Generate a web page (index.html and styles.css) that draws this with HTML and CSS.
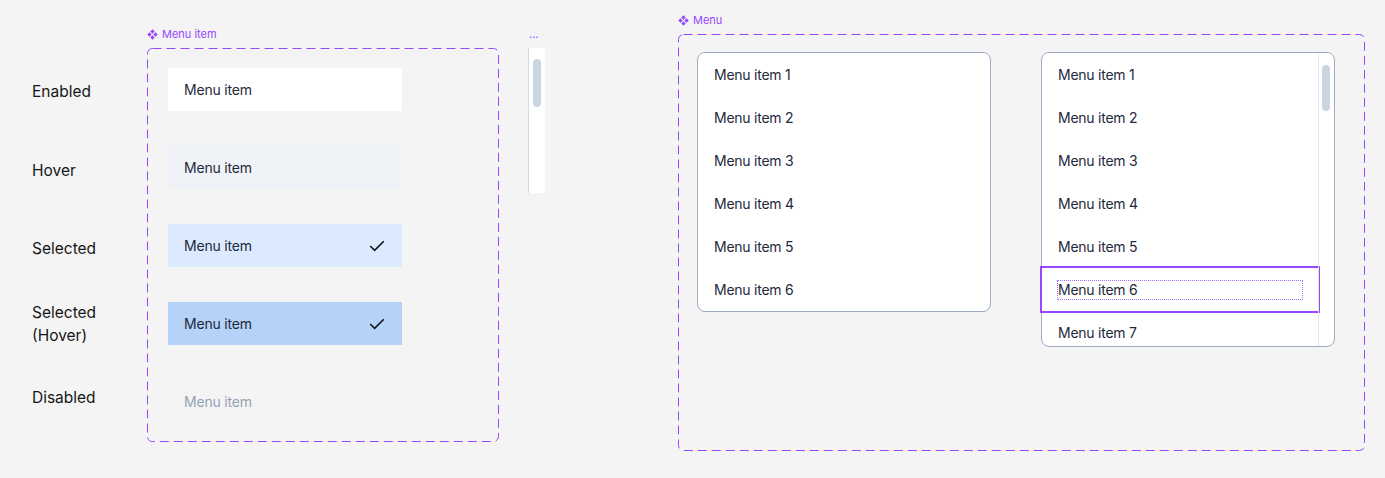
FILE: index.html
```html
<!DOCTYPE html>
<html lang="en">
<head>
<meta charset="utf-8">
<title>Menu</title>
<link rel="stylesheet" href="styles.css">
</head>
<body>
<div class="canvas">
  <section class="states">
    <div class="state-labels">
      <div class="state-label">Enabled</div>
      <div class="state-label">Hover</div>
      <div class="state-label">Selected</div>
      <div class="state-label">Selected<br>(Hover)</div>
      <div class="state-label">Disabled</div>
    </div>
    <div class="component">
      <div class="comp-title">
        <svg class="comp-icon" viewBox="0 0 11 11" width="11" height="11"><path d="M5.5 0.3 L7.7 2.5 L5.5 4.7 L3.3 2.5 Z M2.5 3.3 L4.7 5.5 L2.5 7.7 L0.3 5.5 Z M8.5 3.3 L10.7 5.5 L8.5 7.7 L6.3 5.5 Z M5.5 6.3 L7.7 8.5 L5.5 10.7 L3.3 8.5 Z"/></svg>
        <span>Menu item</span>
      </div>
      <div class="dashed-frame states-frame">
        <svg class="dash"><rect x="0.5" y="0.5" width="100%" height="100%" rx="5" ry="5"/></svg>
        <div class="mi">Menu item</div>
        <div class="mi hover">Menu item</div>
        <div class="mi selected">Menu item<svg class="check" viewBox="0 0 16 16" width="16" height="16"><path d="M1.2 8 L5.6 12.4 L14.8 3.2"/></svg></div>
        <div class="mi selected-hover">Menu item<svg class="check" viewBox="0 0 16 16" width="16" height="16"><path d="M1.2 8 L5.6 12.4 L14.8 3.2"/></svg></div>
        <div class="mi disabled">Menu item</div>
      </div>
    </div>
  </section>

  <section class="scroll-comp">
    <div class="comp-title"><span>...</span></div>
    <div class="strip"><div class="thumb strip-thumb"></div></div>
  </section>

  <section class="menus-comp">
    <div class="comp-title">
      <svg class="comp-icon" viewBox="0 0 11 11" width="11" height="11"><path d="M5.5 0.3 L7.7 2.5 L5.5 4.7 L3.3 2.5 Z M2.5 3.3 L4.7 5.5 L2.5 7.7 L0.3 5.5 Z M8.5 3.3 L10.7 5.5 L8.5 7.7 L6.3 5.5 Z M5.5 6.3 L7.7 8.5 L5.5 10.7 L3.3 8.5 Z"/></svg>
      <span>Menu</span>
    </div>
    <div class="dashed-frame menus-frame">
      <svg class="dash"><rect x="0.5" y="0.5" width="100%" height="100%" rx="5" ry="5"/></svg>
      <div class="menu">
        <div class="menu-item">Menu item 1</div>
        <div class="menu-item">Menu item 2</div>
        <div class="menu-item">Menu item 3</div>
        <div class="menu-item">Menu item 4</div>
        <div class="menu-item">Menu item 5</div>
        <div class="menu-item">Menu item 6</div>
      </div>
      <div class="menu menu-scroll">
        <div class="menu-list">
          <div class="menu-item">Menu item 1</div>
          <div class="menu-item">Menu item 2</div>
          <div class="menu-item">Menu item 3</div>
          <div class="menu-item">Menu item 4</div>
          <div class="menu-item">Menu item 5</div>
          <div class="menu-item focused"><span class="focus-ring">Menu item 6</span></div>
          <div class="menu-item">Menu item 7</div>
        </div>
        <div class="track"><div class="thumb track-thumb"></div></div>
      </div>
    </div>
  </section>
</div>
</body>
</html>
```

FILE: styles.css
```css
* { box-sizing: border-box; }

html, body {
  margin: 0;
  background: #f4f4f4;
}

body {
  font-family: Inter, "Noto Sans", "Liberation Sans", sans-serif;
  color: #1e293b;
}

.canvas {
  display: flex;
  align-items: flex-start;
  padding: 13px 0 0 32px;
  height: 478px;
}

/* ---------- titles ---------- */
.comp-title {
  display: flex;
  align-items: center;
  gap: 4px;
  height: 14px;
  margin-bottom: 7px;
  font-size: 11px;
  line-height: 14px;
  color: #9747ff;
  white-space: nowrap;
}

.comp-icon {
  fill: #9747ff;
  flex: none;
}

/* ---------- dashed frames ---------- */
.dashed-frame {
  position: relative;
}

.dash {
  position: absolute;
  left: 0;
  top: 0;
  width: calc(100% - 1px);
  height: calc(100% - 1px);
  overflow: visible;
  pointer-events: none;
}

.dash rect {
  fill: none;
  stroke: #9747ff;
  stroke-width: 1;
  stroke-dasharray: 9 5;
}

/* ---------- states ---------- */
.states {
  display: flex;
  margin-top: 14px;
}

.state-labels {
  width: 115px;
  padding-top: 53px;
  display: grid;
  grid-template-rows: 79px 78px 64px 85px 23px;
}

.state-label {
  font-size: 15.5px;
  line-height: 23px;
  color: #161616;
}

.states-frame {
  width: 352px;
  height: 394px;
  padding: 20px 0 0 21px;
  display: flex;
  flex-direction: column;
  gap: 35px;
}

.mi {
  width: 234px;
  height: 43px;
  padding: 0 17px 0 16px;
  display: flex;
  align-items: center;
  justify-content: space-between;
  font-size: 14px;
  letter-spacing: -0.2px;
  color: #1e293b;
  background: #ffffff;
}

.mi.hover { background: #eff2f7; }
.mi.selected { background: #dbeafe; }
.mi.selected-hover { background: #b5d3f8; }
.mi.disabled { background: transparent; color: #94a3b8; }

.check {
  flex: none;
  fill: none;
  stroke: #161616;
  stroke-width: 1.6;
}

/* ---------- scrollbar strip ---------- */
.scroll-comp {
  margin-top: 14px;
  margin-left: 29px;
  width: 17px;
}

.scroll-comp .comp-title {
  padding-left: 1px;
}

.strip {
  width: 17px;
  height: 145px;
  padding: 11px 0 0 4px;
  background: #ffffff;
  border-left: 1px solid #d3dce7;
}

.thumb {
  width: 8px;
  border-radius: 4px;
  background: #cbd5e1;
}

.strip-thumb {
  height: 48px;
}

/* ---------- menus ---------- */
.menus-comp {
  margin-left: 133px;
}

.menus-frame {
  width: 687px;
  height: 417px;
  padding: 18px 0 0 19px;
  display: flex;
  align-items: flex-start;
  gap: 50px;
}

.menu {
  width: 294px;
  background: #ffffff;
  border: 1px solid #9eabc5;
  border-radius: 8px;
}

.menu-item {
  height: 43px;
  padding: 0 16px;
  display: flex;
  align-items: center;
  font-size: 14px;
  letter-spacing: -0.25px;
  color: #1e293b;
  white-space: nowrap;
}

.menu-scroll {
  height: 295px;
  display: flex;
}

.menu-list {
  flex: 1;
  min-width: 0;
  overflow-x: visible;
  overflow-y: clip;
}

.track {
  width: 16px;
  flex: none;
  padding: 12px 0 0 3px;
  border-left: 1px solid #e2e8f0;
}

.track-thumb {
  height: 46px;
}

.menu-item.focused {
  outline: 2px solid #9747ff;
  outline-offset: 0;
}

.focus-ring {
  flex: 1;
  line-height: 18px;
  outline: 1px dotted #a56dff;
}
```
